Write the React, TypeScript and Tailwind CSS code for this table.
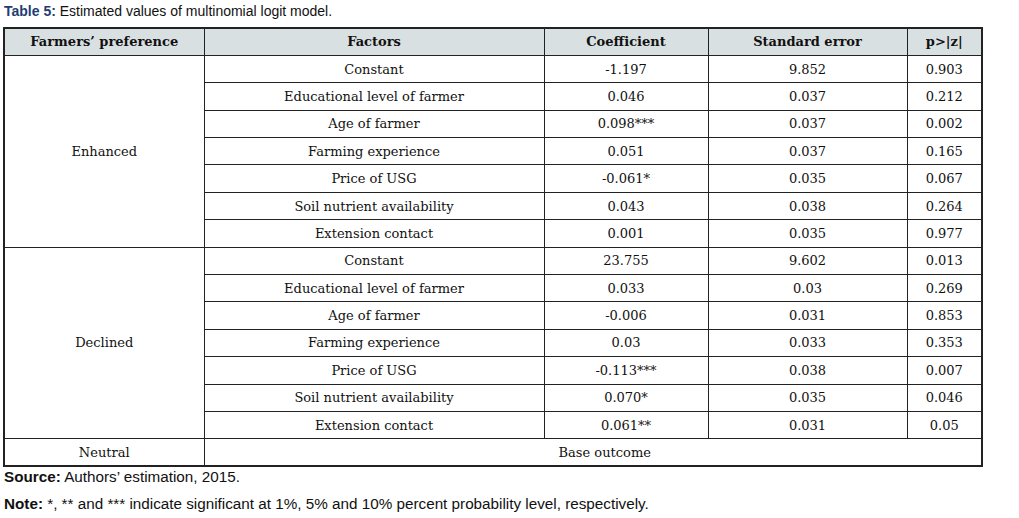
const rows = [
  ["Constant", "-1.197", "9.852", "0.903"],
  ["Educational level of farmer", "0.046", "0.037", "0.212"],
  ["Age of farmer", "0.098***", "0.037", "0.002"],
  ["Farming experience", "0.051", "0.037", "0.165"],
  ["Price of USG", "-0.061*", "0.035", "0.067"],
  ["Soil nutrient availability", "0.043", "0.038", "0.264"],
  ["Extension contact", "0.001", "0.035", "0.977"],
  ["Constant", "23.755", "9.602", "0.013"],
  ["Educational level of farmer", "0.033", "0.03", "0.269"],
  ["Age of farmer", "-0.006", "0.031", "0.853"],
  ["Farming experience", "0.03", "0.033", "0.353"],
  ["Price of USG", "-0.113***", "0.038", "0.007"],
  ["Soil nutrient availability", "0.070*", "0.035", "0.046"],
  ["Extension contact", "0.061**", "0.031", "0.05"],
];

const cell = "border border-[#222] text-center h-[27.4px] p-0 leading-none";

export default function App() {
  return (
    <div className="w-[1019px] h-[518px] bg-white pl-[3px] pt-[3px] font-['Liberation_Sans',Arial,sans-serif] text-[#111]">
      {/* Caption */}
      <p className="text-[14px] leading-[17px] pl-[1px]">
        <span className="font-bold text-[#1f3d73]">Table 5:</span> Estimated values of multinomial logit model.
      </p>

      {/* Table */}
      <table className="mt-[7px] w-[978px] table-fixed border-collapse border-2 border-[#222] font-['DejaVu_Serif',serif] text-[13px]">
        <colgroup>
          <col className="w-[200px]" />
          <col className="w-[340px]" />
          <col className="w-[164px]" />
          <col className="w-[199px]" />
          <col className="w-[75px]" />
        </colgroup>
        <thead>
          <tr className="bg-[#d9e0e2] font-bold">
            <th className={cell}>Farmers’ preference</th>
            <th className={cell}>Factors</th>
            <th className={cell}>Coefficient</th>
            <th className={cell}>Standard error</th>
            <th className={cell}>p&gt;|z|</th>
          </tr>
        </thead>
        <tbody>
          {rows.map((r, i) => (
            <tr key={i}>
              {i === 0 && (
                <td rowSpan={7} className={cell}>
                  Enhanced
                </td>
              )}
              {i === 7 && (
                <td rowSpan={7} className={cell}>
                  Declined
                </td>
              )}
              {r.map((v, j) => (
                <td key={j} className={cell}>
                  {v}
                </td>
              ))}
            </tr>
          ))}
          <tr>
            <td className={cell}>Neutral</td>
            <td colSpan={4} className={cell}>
              <span className="pl-[24px]">Base outcome</span>
            </td>
          </tr>
        </tbody>
      </table>

      {/* Notes */}
      <p className="text-[15.25px] leading-[17px] mt-[1px] pl-[1px]">
        <span className="font-bold">Source:</span> Authors’ estimation, 2015.
      </p>
      <p className="text-[15.25px] leading-[17px] mt-[10px] pl-[1px]">
        <span className="font-bold">Note:</span> *, ** and *** indicate significant at 1%, 5% and 10% percent probability level, respectively.
      </p>
    </div>
  );
}
